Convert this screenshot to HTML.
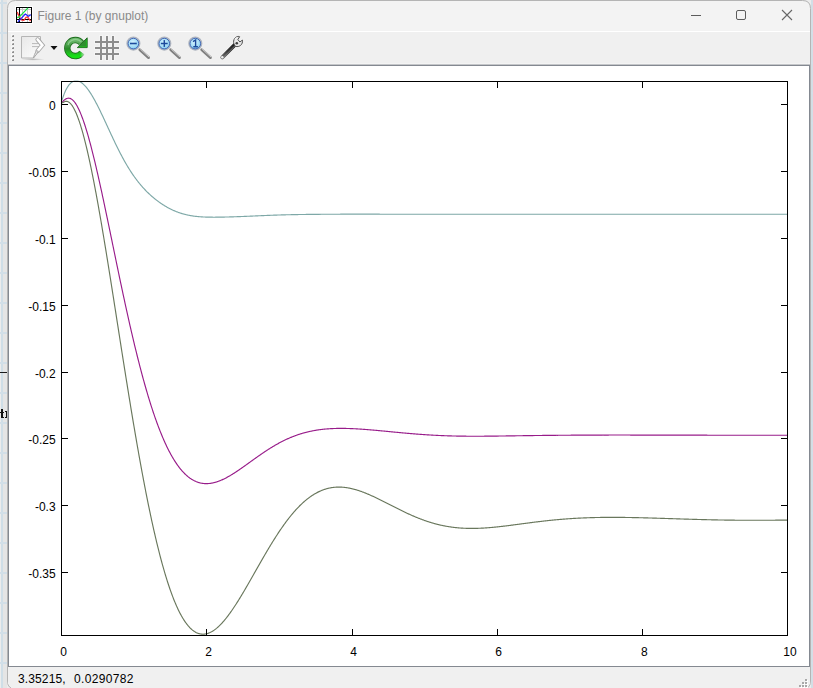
<!DOCTYPE html>
<html><head><meta charset="utf-8">
<style>
html,body{margin:0;padding:0;}
body{width:813px;height:688px;overflow:hidden;position:relative;background:#eceeef;font-family:"Liberation Sans",sans-serif;}
.abs{position:absolute;left:0;top:0;}
.t{position:absolute;white-space:pre;font-size:12px;line-height:14px;}
</style></head><body>
<svg class="abs" width="813" height="688" shape-rendering="crispEdges">
  <rect x="0" y="0" width="813" height="688" fill="#ececec"/>
  <rect x="1" y="0" width="2" height="688" fill="#cfdee7"/>
  <rect x="3" y="0" width="4" height="688" fill="#e5e5e5"/>
  <rect x="811" y="0" width="2" height="688" fill="#d3dee5"/>
  <g fill="#d2dfe8"><rect x="0" y="2" width="7" height="2"/><rect x="811" y="2" width="2" height="2"/><rect x="0" y="32" width="7" height="2"/><rect x="811" y="32" width="2" height="2"/><rect x="0" y="62" width="7" height="2"/><rect x="811" y="62" width="2" height="2"/><rect x="0" y="92" width="7" height="2"/><rect x="811" y="92" width="2" height="2"/><rect x="0" y="122" width="7" height="2"/><rect x="811" y="122" width="2" height="2"/><rect x="0" y="152" width="7" height="2"/><rect x="811" y="152" width="2" height="2"/><rect x="0" y="182" width="7" height="2"/><rect x="811" y="182" width="2" height="2"/><rect x="0" y="212" width="7" height="2"/><rect x="811" y="212" width="2" height="2"/><rect x="0" y="242" width="7" height="2"/><rect x="811" y="242" width="2" height="2"/><rect x="0" y="272" width="7" height="2"/><rect x="811" y="272" width="2" height="2"/><rect x="0" y="302" width="7" height="2"/><rect x="811" y="302" width="2" height="2"/><rect x="0" y="332" width="7" height="2"/><rect x="811" y="332" width="2" height="2"/><rect x="0" y="362" width="7" height="2"/><rect x="811" y="362" width="2" height="2"/><rect x="0" y="392" width="7" height="2"/><rect x="811" y="392" width="2" height="2"/><rect x="0" y="422" width="7" height="2"/><rect x="811" y="422" width="2" height="2"/><rect x="0" y="452" width="7" height="2"/><rect x="811" y="452" width="2" height="2"/><rect x="0" y="482" width="7" height="2"/><rect x="811" y="482" width="2" height="2"/><rect x="0" y="512" width="7" height="2"/><rect x="811" y="512" width="2" height="2"/><rect x="0" y="542" width="7" height="2"/><rect x="811" y="542" width="2" height="2"/><rect x="0" y="572" width="7" height="2"/><rect x="811" y="572" width="2" height="2"/><rect x="0" y="602" width="7" height="2"/><rect x="811" y="602" width="2" height="2"/><rect x="0" y="632" width="7" height="2"/><rect x="811" y="632" width="2" height="2"/><rect x="0" y="662" width="7" height="2"/><rect x="811" y="662" width="2" height="2"/></g>
  <rect x="0" y="372" width="7" height="1" fill="#1a1a1a"/><g fill="#111"><rect x="1" y="409" width="1.6" height="9"/><rect x="0" y="411.5" width="3.5" height="1.2"/><rect x="1.5" y="416.8" width="2.5" height="1.2"/><rect x="5.8" y="411" width="1.4" height="7"/><rect x="4.8" y="411" width="2" height="1"/><rect x="4.8" y="417" width="2" height="1"/></g>
  <!-- window -->
  
</svg>
<!-- window frame with rounded corners -->
<svg class="abs" width="813" height="688">
  <path d="M7.5,681 L7.5,8.5 Q7.5,0.5 15.5,0.5 L802.5,0.5 Q810.5,0.5 810.5,8.5 L810.5,681 Q810.5,689 802.5,689 L15.5,689 Q7.5,689 7.5,681 Z" fill="#f3f3f3" stroke="#b4b4b4" stroke-width="1"/>
</svg>
<svg class="abs" width="813" height="688" shape-rendering="crispEdges">
  <rect x="8" y="31" width="802" height="1" fill="#ffffff"/>
  <rect x="8" y="32" width="802" height="32" fill="#f0f0f0"/>
  <rect x="8" y="63" width="802" height="1" fill="#f4f4f4"/>
  <rect x="8" y="64" width="802" height="1" fill="#c4c6c9"/>
  <rect x="8" y="65" width="802" height="602" fill="#848991"/>
  <rect x="9" y="66" width="800" height="600" fill="#ffffff"/>
  <path d="M8,667 L810,667 L810,681 Q810,688.5 802.5,688.5 L15.5,688.5 Q8,688.5 8,681 Z" fill="#f0f0f0"/>
  <!-- grip dots -->
  <g fill="#8f8f8f"><rect x="11" y="34" width="3" height="3" fill="#f8f8f8"/><rect x="12" y="36" width="2" height="1" fill="#8e8e8e"/><rect x="13" y="35" width="1" height="1" fill="#9a9a9a"/><rect x="12" y="35" width="1" height="1" fill="#c8c8c8"/><rect x="11" y="38" width="3" height="3" fill="#f8f8f8"/><rect x="12" y="40" width="2" height="1" fill="#8e8e8e"/><rect x="13" y="39" width="1" height="1" fill="#9a9a9a"/><rect x="12" y="39" width="1" height="1" fill="#c8c8c8"/><rect x="11" y="42" width="3" height="3" fill="#f8f8f8"/><rect x="12" y="44" width="2" height="1" fill="#8e8e8e"/><rect x="13" y="43" width="1" height="1" fill="#9a9a9a"/><rect x="12" y="43" width="1" height="1" fill="#c8c8c8"/><rect x="11" y="46" width="3" height="3" fill="#f8f8f8"/><rect x="12" y="48" width="2" height="1" fill="#8e8e8e"/><rect x="13" y="47" width="1" height="1" fill="#9a9a9a"/><rect x="12" y="47" width="1" height="1" fill="#c8c8c8"/><rect x="11" y="50" width="3" height="3" fill="#f8f8f8"/><rect x="12" y="52" width="2" height="1" fill="#8e8e8e"/><rect x="13" y="51" width="1" height="1" fill="#9a9a9a"/><rect x="12" y="51" width="1" height="1" fill="#c8c8c8"/><rect x="11" y="54" width="3" height="3" fill="#f8f8f8"/><rect x="12" y="56" width="2" height="1" fill="#8e8e8e"/><rect x="13" y="55" width="1" height="1" fill="#9a9a9a"/><rect x="12" y="55" width="1" height="1" fill="#c8c8c8"/><rect x="11" y="58" width="3" height="3" fill="#f8f8f8"/><rect x="12" y="60" width="2" height="1" fill="#8e8e8e"/><rect x="13" y="59" width="1" height="1" fill="#9a9a9a"/><rect x="12" y="59" width="1" height="1" fill="#c8c8c8"/></g>
  <g fill="#ffffff"><rect x="806" y="680" width="2" height="2"/><rect x="803" y="683" width="2" height="2"/><rect x="806" y="683" width="2" height="2"/><rect x="800" y="686" width="2" height="2"/><rect x="803" y="686" width="2" height="2"/><rect x="806" y="686" width="2" height="2"/></g><g fill="#a8a8a8"><rect x="805" y="679" width="2" height="2"/><rect x="802" y="682" width="2" height="2"/><rect x="805" y="682" width="2" height="2"/><rect x="799" y="685" width="2" height="2"/><rect x="802" y="685" width="2" height="2"/><rect x="805" y="685" width="2" height="2"/></g>
</svg>
<!-- title icon -->
<svg class="abs" width="813" height="688">
  <rect x="15" y="6" width="18" height="18" fill="#ffffff"/>
  <rect x="16.5" y="7.5" width="15" height="15" fill="#ffffff" stroke="#000" stroke-width="1"/>
  <g stroke="#c8c8c8" stroke-width="1"><line x1="22.5" y1="8" x2="22.5" y2="22"/><line x1="27.5" y1="8" x2="27.5" y2="22"/><line x1="17" y1="9.5" x2="31" y2="9.5"/><line x1="17" y1="14.5" x2="31" y2="14.5"/></g>
  <g stroke="#000" stroke-width="1"><line x1="19.5" y1="8" x2="19.5" y2="22"/><line x1="17" y1="19.5" x2="31" y2="19.5"/></g>
  <path d="M17.2,12 L19.3,16.6 L21.4,20 L23.9,20.4 L26,17.3 L27.7,16.9 L30.5,21.1" fill="none" stroke="#ff3030" stroke-width="1.2"/>
  <path d="M17.2,17.6 L19.3,16.9 L28,7.8" fill="none" stroke="#10e040" stroke-width="1.2"/>
  <path d="M17.9,21.8 L25.3,14.1 L28.4,16.2 L30.8,14.8" fill="none" stroke="#2020ff" stroke-width="1.2"/>
</svg>
<div class="t" style="left:37.5px;top:9px;color:#8a8a8a;">Figure 1 (by gnuplot)</div>
<!-- window controls -->
<svg class="abs" width="813" height="688">
  <line x1="691" y1="15.5" x2="701" y2="15.5" stroke="#5c5c5c" stroke-width="1"/>
  <rect x="736.5" y="10.5" width="9" height="9" rx="1.5" fill="none" stroke="#5c5c5c" stroke-width="1"/>
  <path d="M782,10 L792,20 M792,10 L782,20" stroke="#666" stroke-width="1.1" fill="none"/>
</svg>
<svg class="abs" width="813" height="688">
  <defs>
    <linearGradient id="pg" x1="0" y1="0" x2="1" y2="1">
      <stop offset="0" stop-color="#e8e8e8"/><stop offset="1" stop-color="#fefefe"/>
    </linearGradient>
    <radialGradient id="sh" cx="0.5" cy="0.5" r="0.5">
      <stop offset="0" stop-color="#b8b8b8"/><stop offset="1" stop-color="#b8b8b8" stop-opacity="0"/>
    </radialGradient>
    <linearGradient id="gr" x1="0" y1="0" x2="0" y2="1">
      <stop offset="0" stop-color="#6fba6f"/><stop offset="0.3" stop-color="#4aa04a"/><stop offset="0.55" stop-color="#2a8a2a"/><stop offset="1" stop-color="#14e014"/>
    </linearGradient>
    <linearGradient id="fade" x1="0" y1="0" x2="1" y2="0">
      <stop offset="0" stop-color="#f0f0f0" stop-opacity="0"/><stop offset="0.6" stop-color="#f0f0f0" stop-opacity="0.9"/><stop offset="1" stop-color="#f0f0f0"/>
    </linearGradient>
    <radialGradient id="lens" cx="0.45" cy="0.4" r="0.6">
      <stop offset="0" stop-color="#d8f4ff"/><stop offset="0.7" stop-color="#9ad8f4"/><stop offset="1" stop-color="#6fb6e6"/>
    </radialGradient>
    <linearGradient id="hd" x1="0" y1="0" x2="1" y2="0">
      <stop offset="0" stop-color="#6a6a6a"/><stop offset="1" stop-color="#d0d0d0"/>
    </linearGradient>
  </defs>
  <!-- document icon -->
  <ellipse cx="33" cy="59.4" rx="11.5" ry="1.3" fill="url(#sh)"/>
  <path d="M21.5,36.5 L40.5,36.5 L40.5,40 L43,45 L33.5,58 L21.5,58 Z" fill="url(#pg)" stroke="#b5b5b5" stroke-width="1"/>
  <g stroke="#b9b9b9" stroke-width="1"><line x1="32" y1="43.6" x2="40" y2="43.6"/><line x1="32" y1="46.6" x2="40" y2="46.6"/></g>
  <path d="M37.6,39.5 L42.4,45.2 L37.6,50.9" fill="none" stroke="#a9a9a9" stroke-width="4.4" stroke-linecap="round" stroke-linejoin="miter"/>
  <path d="M37.6,39.5 L42.4,45.2 L37.6,50.9" fill="none" stroke="#ffffff" stroke-width="2.6" stroke-linecap="round" stroke-linejoin="miter"/>
  <path d="M38.4,51.2 Q36.5,55 33.3,58 Q34.2,54.5 36.4,50.6 Z" fill="#e2e2e2" stroke="#a6a6a6" stroke-width="0.9" stroke-linejoin="round"/>
  <path d="M50.5,46 L57.5,46 L54,50 Z" fill="#111"/>
  <!-- refresh -->
  <path d="M81.4,42.9 A8,8 0 1 0 81.85,52.6" fill="none" stroke="#1d6e1d" stroke-width="6.4"/>
  <path d="M81.4,42.9 A8,8 0 1 0 81.85,52.6" fill="none" stroke="url(#gr)" stroke-width="4.8"/>
  <path d="M81.5,42.2 A7.9,7.9 0 0 0 68,45" fill="none" stroke="#9ad89a" stroke-width="1.2" opacity="0.7"/>
  <path d="M77.3,47.6 L87.2,37.8 L87.2,47.6 Z" fill="#2f8f2f" stroke="#1a6a1a" stroke-width="0.9" stroke-linejoin="round"/>
  <path d="M79.5,46.8 L86.4,46.8 L86.4,40" fill="none" stroke="#20c020" stroke-width="1" opacity="0.8"/>
  <rect x="80" y="49" width="9" height="8" fill="url(#fade)"/>
<!-- grid -->
  <g fill="#ffffff" opacity="0.35" shape-rendering="crispEdges">
    <rect x="99" y="35" width="4" height="26"/><rect x="105" y="35" width="4" height="26"/><rect x="111" y="35" width="4" height="26"/>
    <rect x="94" y="40" width="26" height="4"/><rect x="94" y="46" width="26" height="4"/><rect x="94" y="52" width="26" height="4"/>
  </g>
  <g fill="#8d8d8d" shape-rendering="crispEdges">
    <rect x="100" y="36" width="2" height="24"/><rect x="106" y="36" width="2" height="24"/><rect x="112" y="36" width="2" height="24"/>
    <rect x="95" y="41" width="24" height="2"/><rect x="95" y="47" width="24" height="2"/><rect x="95" y="53" width="24" height="2"/>
  </g>
  <!-- magnifiers -->
  <g>
    <line x1="139.8" y1="49.8" x2="148.6" y2="57.6" stroke="#808080" stroke-width="2.8" stroke-linecap="round"/>
    <line x1="140.6" y1="49.4" x2="149.0" y2="56.9" stroke="#d8d8d8" stroke-width="0.9" stroke-linecap="round"/>
    <circle cx="133.4" cy="43.6" r="6.3" fill="url(#lens)" stroke="#aeb4bf" stroke-width="1.5"/>
    <circle cx="133.4" cy="43.6" r="5.3" fill="none" stroke="#3a5cb0" stroke-width="0.9"/>
    <line x1="130.0" y1="43.5" x2="136.8" y2="43.5" stroke="#1c4a9c" stroke-width="1.6"/>
  </g>
  <g>
    <line x1="170.7" y1="49.8" x2="179.5" y2="57.6" stroke="#808080" stroke-width="2.8" stroke-linecap="round"/>
    <line x1="171.5" y1="49.4" x2="179.9" y2="56.9" stroke="#d8d8d8" stroke-width="0.9" stroke-linecap="round"/>
    <circle cx="164.3" cy="43.6" r="6.3" fill="url(#lens)" stroke="#aeb4bf" stroke-width="1.5"/>
    <circle cx="164.3" cy="43.6" r="5.3" fill="none" stroke="#3a5cb0" stroke-width="0.9"/>
    <line x1="160.9" y1="43.5" x2="167.7" y2="43.5" stroke="#1c4a9c" stroke-width="1.5"/><line x1="164.3" y1="40.1" x2="164.3" y2="46.9" stroke="#1c4a9c" stroke-width="1.5"/>
  </g>
  <g>
    <line x1="201.7" y1="49.8" x2="210.5" y2="57.6" stroke="#808080" stroke-width="2.8" stroke-linecap="round"/>
    <line x1="202.5" y1="49.4" x2="210.9" y2="56.9" stroke="#d8d8d8" stroke-width="0.9" stroke-linecap="round"/>
    <circle cx="195.3" cy="43.6" r="6.3" fill="url(#lens)" stroke="#aeb4bf" stroke-width="1.5"/>
    <circle cx="195.3" cy="43.6" r="5.3" fill="none" stroke="#3a5cb0" stroke-width="0.9"/>
    <path d="M193.0,41.6 L195.6,40 L195.6,46.6 M193.3,46.7 L197.9,46.7" fill="none" stroke="#1c4a9c" stroke-width="1.4"/>
  </g>
  <!-- wrench -->
  <defs><linearGradient id="wh" gradientUnits="userSpaceOnUse" x1="235" y1="45" x2="221" y2="59">
    <stop offset="0" stop-color="#1e1e1e"/><stop offset="0.5" stop-color="#3a3a3a"/><stop offset="1" stop-color="#7a7a7a"/></linearGradient></defs>
  <path d="M222.3,57.3 L235,44.6" stroke="#f6f6f6" stroke-width="5.6" stroke-linecap="round" opacity="0.7"/>
  <path d="M222.3,57.3 L235,44.6" stroke="url(#wh)" stroke-width="4" stroke-linecap="round"/>
  <path d="M223.5,57.2 L234.4,46.3" stroke="#9a9a9a" stroke-width="0.8" stroke-linecap="round" opacity="0.8"/>
  <circle cx="222.3" cy="57.3" r="1.2" fill="#f0f0f0"/>
  <path d="M234.6,45.2 C232.3,41.8 234,37 238.2,36.4 L239.6,36.7 L237.9,39.6 L239.9,42 L242.4,40.1 C243.2,44.6 239.2,47.4 235.6,46.4 Z" fill="#e6e6e6" stroke="#3e3e3e" stroke-width="0.9" stroke-linejoin="round"/>
  <path d="M235.2,39.5 C235.6,38.2 236.6,37.5 237.6,37.3" fill="none" stroke="#ffffff" stroke-width="1"/>
  <circle cx="236.8" cy="43.3" r="1.3" fill="#3a3a3a"/>
</svg>

<!-- plot -->
<svg class="abs" width="813" height="688">
  <defs><clipPath id="pc"><rect x="61" y="80.5" width="727" height="556"/></clipPath></defs>
  <g fill="none" stroke-width="1.15" clip-path="url(#pc)">
    <path d="M62,100.12 62.5,98.56 63,97.08 63.5,95.69 64,94.37 64.5,93.13 65,91.96 65.5,90.86 66,89.83 66.5,88.87 67,87.96 67.5,87.13 68,86.35 68.5,85.62 69,84.96 69.5,84.35 70,83.79 70.5,83.28 71,82.82 71.5,82.41 72,82.05 72.5,81.73 73,81.46 73.5,81.23 74,81.05 74.5,80.90 75,80.80 75.5,80.73 76,80.71 76.5,80.72 77,80.76 77.5,80.84 78,80.96 78.5,81.11 79,81.29 79.5,81.51 80,81.76 80.5,82.03 81,82.34 81.5,82.68 82,83.05 82.5,83.44 83,83.87 83.5,84.32 84,84.79 84.5,85.29 85,85.82 85.5,86.37 86,86.95 86.5,87.55 87,88.17 87.5,88.82 88,89.48 88.5,90.17 89,90.88 89.5,91.61 90,92.35 90.5,93.12 91,93.91 91.5,94.71 92,95.53 92.5,96.37 93,97.22 93.5,98.09 94,98.98 94.5,99.88 95,100.79 95.5,101.72 96,102.66 96.5,103.61 97,104.57 97.5,105.55 98,106.53 98.5,107.53 99,108.54 99.5,109.55 100,110.57 100.5,111.60 101,112.64 101.5,113.69 102,114.74 102.5,115.80 103,116.86 103.5,117.92 104,119.00 104.5,120.07 105,121.15 105.5,122.23 106,123.31 106.5,124.40 107,125.48 107.5,126.57 108,127.65 108.5,128.74 109,129.83 109.5,130.91 110,131.99 110.5,133.07 111,134.15 111.5,135.23 112,136.30 112.5,137.36 113,138.43 113.5,139.49 114,140.54 114.5,141.59 115,142.64 115.5,143.68 116,144.71 116.5,145.73 117,146.75 117.5,147.77 118,148.77 118.5,149.77 119,150.76 119.5,151.74 120,152.72 120.5,153.68 121,154.64 121.5,155.59 122,156.53 122.5,157.46 123,158.39 123.5,159.30 124,160.20 124.5,161.10 125,161.98 125.5,162.86 126,163.73 126.5,164.58 127,165.43 127.5,166.27 128,167.10 128.5,167.91 129,168.72 129.5,169.52 130,170.31 130.5,171.09 131,171.86 131.5,172.62 132,173.37 132.5,174.11 133,174.84 133.5,175.56 134,176.27 134.5,176.98 135,177.67 135.5,178.35 136,179.03 136.5,179.70 137,180.35 137.5,181.00 138,181.64 138.5,182.27 139,182.90 139.5,183.51 140,184.12 140.5,184.72 141,185.31 141.5,185.89 142,186.46 142.5,187.03 143,187.59 143.5,188.14 144,188.68 144.5,189.22 145,189.75 145.5,190.27 146,190.78 146.5,191.29 147,191.79 147.5,192.29 148,192.77 148.5,193.26 149,193.73 149.5,194.20 150,194.66 150.5,195.12 151,195.57 151.5,196.01 152,196.45 152.5,196.88 153,197.31 153.5,197.73 154,198.15 154.5,198.56 155,198.96 155.5,199.36 156,199.75 156.5,200.14 157,200.52 157.5,200.90 158,201.27 158.5,201.64 159,202.00 159.5,202.36 160,202.71 160.5,203.06 161,203.40 161.5,203.74 162,204.07 162.5,204.40 163,204.72 163.5,205.04 164,205.35 164.5,205.66 165,205.96 165.5,206.26 166,206.56 166.5,206.85 167,207.13 167.5,207.41 168,207.69 168.5,207.96 169,208.22 169.5,208.48 170,208.74 170.5,208.99 171,209.24 171.5,209.48 172,209.72 172.5,209.96 173,210.19 173.5,210.41 174,210.63 174.5,210.85 175,211.06 175.5,211.27 176,211.47 176.5,211.67 177,211.87 177.5,212.06 178,212.24 178.5,212.42 179,212.60 179.5,212.77 180,212.94 180.5,213.11 181,213.27 181.5,213.42 182,213.58 182.5,213.73 183,213.87 183.5,214.01 184,214.15 184.5,214.28 185,214.41 185.5,214.53 186,214.66 186.5,214.77 187,214.89 187.5,215.00 188,215.11 188.5,215.21 189,215.31 189.5,215.41 190,215.50 190.5,215.59 191,215.68 191.5,215.76 192,215.84 192.5,215.92 193,215.99 193.5,216.06 194,216.13 194.5,216.20 195,216.26 195.5,216.32 196,216.38 196.5,216.44 197,216.49 197.5,216.54 198,216.59 198.5,216.63 199,216.68 199.5,216.72 200,216.76 200.5,216.79 201,216.83 201.5,216.86 202,216.89 202.5,216.92 203,216.95 203.5,216.97 204,217.00 204.5,217.02 205,217.04 205.5,217.06 206,217.08 206.5,217.09 207,217.11 207.5,217.12 208,217.14 208.5,217.15 209,217.16 209.5,217.16 210,217.17 210.5,217.18 211,217.18 211.5,217.19 212,217.19 212.5,217.19 213,217.20 213.5,217.20 214,217.20 214.5,217.20 215,217.20 215.5,217.19 216,217.19 216.5,217.19 217,217.18 217.5,217.18 218,217.17 218.5,217.17 219,217.16 219.5,217.15 220,217.15 220.5,217.14 221,217.13 221.5,217.12 222,217.11 222.5,217.10 223,217.09 223.5,217.08 224,217.07 224.5,217.06 225,217.05 225.5,217.04 226,217.03 226.5,217.01 227,217.00 227.5,216.99 228,216.97 228.5,216.96 229,216.95 229.5,216.93 230,216.92 230.5,216.90 231,216.89 231.5,216.88 232,216.86 232.5,216.84 233,216.83 233.5,216.81 234,216.80 234.5,216.78 235,216.76 235.5,216.75 236,216.73 236.5,216.71 237,216.69 237.5,216.68 238,216.66 238.5,216.64 239,216.62 239.5,216.60 240,216.58 240.5,216.57 241,216.55 241.5,216.53 242,216.51 242.5,216.49 243,216.47 243.5,216.45 244,216.43 244.5,216.41 245,216.39 245.5,216.37 246,216.35 246.5,216.33 247,216.30 247.5,216.28 248,216.26 248.5,216.24 249,216.22 249.5,216.20 250,216.18 250.5,216.15 251,216.13 251.5,216.11 252,216.09 252.5,216.07 253,216.04 253.5,216.02 254,216.00 254.5,215.98 255,215.96 255.5,215.93 256,215.91 256.5,215.89 257,215.87 257.5,215.84 258,215.82 258.5,215.80 259,215.78 259.5,215.75 260,215.73 260.5,215.71 261,215.69 261.5,215.67 262,215.64 262.5,215.62 263,215.60 263.5,215.58 264,215.56 264.5,215.54 265,215.52 265.5,215.50 266,215.47 266.5,215.45 267,215.43 267.5,215.41 268,215.39 268.5,215.37 269,215.35 269.5,215.33 270,215.31 270.5,215.29 271,215.27 271.5,215.26 272,215.24 272.5,215.22 273,215.20 273.5,215.18 274,215.16 274.5,215.15 275,215.13 275.5,215.11 276,215.09 276.5,215.08 277,215.06 277.5,215.04 278,215.03 278.5,215.01 279,215.00 279.5,214.98 280,214.97 280.5,214.95 281,214.94 281.5,214.92 282,214.91 282.5,214.89 283,214.88 283.5,214.87 284,214.85 284.5,214.84 285,214.83 285.5,214.81 286,214.80 286.5,214.79 287,214.78 287.5,214.76 288,214.75 288.5,214.74 289,214.73 289.5,214.72 290,214.71 290.5,214.70 291,214.69 291.5,214.68 292,214.67 292.5,214.66 293,214.65 293.5,214.64 294,214.63 294.5,214.62 295,214.61 295.5,214.60 296,214.59 296.5,214.58 297,214.57 297.5,214.57 298,214.56 298.5,214.55 299,214.54 299.5,214.53 300,214.53 300.5,214.52 301,214.51 301.5,214.50 302,214.50 302.5,214.49 303,214.48 303.5,214.48 304,214.47 304.5,214.46 305,214.46 305.5,214.45 306,214.44 306.5,214.44 307,214.43 307.5,214.43 308,214.42 308.5,214.41 309,214.41 309.5,214.40 310,214.40 310.5,214.39 311,214.39 311.5,214.38 312,214.38 312.5,214.37 313,214.36 313.5,214.36 314,214.35 314.5,214.35 315,214.35 315.5,214.34 316,214.34 316.5,214.33 317,214.33 317.5,214.32 318,214.32 318.5,214.31 319,214.31 319.5,214.31 320,214.30 320.5,214.30 321,214.29 321.5,214.29 322,214.29 322.5,214.28 323,214.28 323.5,214.28 324,214.27 324.5,214.27 325,214.27 325.5,214.26 326,214.26 326.5,214.26 327,214.25 327.5,214.25 328,214.25 328.5,214.24 329,214.24 329.5,214.24 330,214.24 330.5,214.23 331,214.23 331.5,214.23 332,214.23 332.5,214.22 333,214.22 333.5,214.22 334,214.22 334.5,214.21 335,214.21 335.5,214.21 336,214.21 336.5,214.21 337,214.20 337.5,214.20 338,214.20 338.5,214.20 339,214.20 339.5,214.20 340,214.20 340.5,214.19 341,214.19 341.5,214.19 342,214.19 342.5,214.19 343,214.19 343.5,214.19 344,214.19 344.5,214.19 345,214.19 345.5,214.18 346,214.18 346.5,214.18 347,214.18 347.5,214.18 348,214.18 348.5,214.18 349,214.18 349.5,214.18 350,214.18 350.5,214.18 351,214.18 351.5,214.18 352,214.18 352.5,214.18 353,214.18 353.5,214.18 354,214.18 354.5,214.18 355,214.18 355.5,214.18 356,214.18 356.5,214.18 357,214.18 357.5,214.18 358,214.18 358.5,214.18 359,214.18 359.5,214.18 360,214.18 360.5,214.18 361,214.18 361.5,214.18 362,214.18 362.5,214.18 363,214.18 363.5,214.18 364,214.18 364.5,214.18 365,214.18 365.5,214.18 366,214.18 366.5,214.18 367,214.18 367.5,214.18 368,214.18 368.5,214.19 369,214.19 369.5,214.19 370,214.19 370.5,214.19 371,214.19 371.5,214.19 372,214.19 372.5,214.19 373,214.19 373.5,214.19 374,214.19 374.5,214.19 375,214.19 375.5,214.19 376,214.19 376.5,214.19 377,214.19 377.5,214.19 378,214.19 378.5,214.19 379,214.19 379.5,214.19 380,214.20 380.5,214.20 381,214.20 381.5,214.20 382,214.20 382.5,214.20 383,214.20 383.5,214.20 384,214.20 384.5,214.20 385,214.20 385.5,214.20 386,214.20 386.5,214.20 387,214.20 387.5,214.20 388,214.20 388.5,214.20 389,214.20 389.5,214.20 390,214.20 390.5,214.20 391,214.20 391.5,214.20 392,214.21 392.5,214.21 393,214.21 393.5,214.21 394,214.21 394.5,214.21 395,214.21 395.5,214.21 396,214.21 396.5,214.21 397,214.21 397.5,214.21 398,214.21 398.5,214.21 399,214.21 399.5,214.21 400,214.21 400.5,214.21 401,214.21 401.5,214.21 402,214.21 402.5,214.21 403,214.21 403.5,214.21 404,214.22 404.5,214.22 405,214.22 405.5,214.22 406,214.22 406.5,214.22 407,214.22 407.5,214.22 408,214.22 408.5,214.22 409,214.22 409.5,214.22 410,214.22 410.5,214.22 411,214.22 411.5,214.22 412,214.22 412.5,214.22 413,214.22 413.5,214.22 414,214.22 414.5,214.22 415,214.22 415.5,214.22 416,214.23 416.5,214.23 417,214.23 417.5,214.23 418,214.23 418.5,214.23 419,214.23 419.5,214.23 420,214.23 420.5,214.23 421,214.23 421.5,214.23 422,214.23 422.5,214.23 423,214.23 423.5,214.23 424,214.23 424.5,214.23 425,214.23 425.5,214.23 426,214.23 426.5,214.23 427,214.23 427.5,214.23 428,214.23 428.5,214.23 429,214.23 429.5,214.23 430,214.24 430.5,214.24 431,214.24 431.5,214.24 432,214.24 432.5,214.24 433,214.24 433.5,214.24 434,214.24 434.5,214.24 435,214.24 435.5,214.24 436,214.24 436.5,214.24 437,214.24 437.5,214.24 438,214.24 438.5,214.24 439,214.24 439.5,214.24 440,214.24 440.5,214.24 441,214.24 441.5,214.24 442,214.24 442.5,214.24 443,214.24 443.5,214.24 444,214.24 444.5,214.24 445,214.24 445.5,214.24 446,214.24 446.5,214.24 447,214.24 447.5,214.24 448,214.24 448.5,214.24 449,214.24 449.5,214.24 450,214.24 450.5,214.24 451,214.24 451.5,214.24 452,214.24 452.5,214.24 453,214.24 453.5,214.24 454,214.24 454.5,214.24 455,214.24 455.5,214.24 456,214.24 456.5,214.24 457,214.24 457.5,214.24 458,214.24 458.5,214.24 459,214.24 459.5,214.24 460,214.24 460.5,214.24 461,214.25 461.5,214.25 462,214.25 462.5,214.25 463,214.25 463.5,214.25 464,214.25 464.5,214.25 465,214.25 465.5,214.25 466,214.25 466.5,214.25 467,214.25 467.5,214.25 468,214.25 468.5,214.25 469,214.25 469.5,214.25 470,214.25 470.5,214.25 471,214.25 471.5,214.25 472,214.25 472.5,214.25 473,214.25 473.5,214.25 474,214.25 474.5,214.25 475,214.25 475.5,214.25 476,214.25 476.5,214.25 477,214.25 477.5,214.25 478,214.25 478.5,214.25 479,214.25 479.5,214.25 480,214.25 480.5,214.25 481,214.25 481.5,214.25 482,214.25 482.5,214.25 483,214.25 483.5,214.25 484,214.25 484.5,214.25 485,214.25 485.5,214.25 486,214.25 486.5,214.25 487,214.25 487.5,214.25 488,214.25 488.5,214.25 489,214.25 489.5,214.25 490,214.25 490.5,214.25 491,214.25 491.5,214.25 492,214.25 492.5,214.25 493,214.25 493.5,214.25 494,214.25 494.5,214.25 495,214.25 495.5,214.25 496,214.25 496.5,214.25 497,214.25 497.5,214.25 498,214.25 498.5,214.25 499,214.25 499.5,214.25 500,214.25 500.5,214.25 501,214.25 501.5,214.25 502,214.25 502.5,214.25 503,214.25 503.5,214.25 504,214.25 504.5,214.25 505,214.25 505.5,214.25 506,214.25 506.5,214.25 507,214.25 507.5,214.25 508,214.25 508.5,214.25 509,214.25 509.5,214.25 510,214.25 510.5,214.25 511,214.25 511.5,214.25 512,214.25 512.5,214.25 513,214.25 513.5,214.25 514,214.25 514.5,214.25 515,214.25 515.5,214.25 516,214.25 516.5,214.25 517,214.25 517.5,214.25 518,214.25 518.5,214.25 519,214.25 519.5,214.25 520,214.25 520.5,214.25 521,214.25 521.5,214.25 522,214.25 522.5,214.25 523,214.25 523.5,214.25 524,214.25 524.5,214.25 525,214.25 525.5,214.25 526,214.25 526.5,214.25 527,214.25 527.5,214.25 528,214.25 528.5,214.25 529,214.25 529.5,214.25 530,214.25 530.5,214.25 531,214.25 531.5,214.25 532,214.25 532.5,214.25 533,214.25 533.5,214.25 534,214.25 534.5,214.25 535,214.25 535.5,214.25 536,214.25 536.5,214.25 537,214.25 537.5,214.25 538,214.25 538.5,214.25 539,214.25 539.5,214.25 540,214.25 540.5,214.25 541,214.25 541.5,214.25 542,214.25 542.5,214.25 543,214.25 543.5,214.25 544,214.25 544.5,214.25 545,214.25 545.5,214.25 546,214.25 546.5,214.25 547,214.25 547.5,214.25 548,214.25 548.5,214.25 549,214.25 549.5,214.25 550,214.25 550.5,214.25 551,214.25 551.5,214.25 552,214.25 552.5,214.25 553,214.25 553.5,214.25 554,214.25 554.5,214.25 555,214.25 555.5,214.25 556,214.25 556.5,214.25 557,214.25 557.5,214.25 558,214.25 558.5,214.25 559,214.25 559.5,214.25 560,214.25 560.5,214.25 561,214.25 561.5,214.25 562,214.25 562.5,214.25 563,214.25 563.5,214.25 564,214.25 564.5,214.25 565,214.25 565.5,214.25 566,214.25 566.5,214.25 567,214.25 567.5,214.25 568,214.25 568.5,214.25 569,214.25 569.5,214.25 570,214.25 570.5,214.25 571,214.25 571.5,214.25 572,214.25 572.5,214.25 573,214.25 573.5,214.25 574,214.25 574.5,214.25 575,214.25 575.5,214.25 576,214.25 576.5,214.25 577,214.25 577.5,214.25 578,214.25 578.5,214.25 579,214.25 579.5,214.25 580,214.25 580.5,214.25 581,214.25 581.5,214.25 582,214.25 582.5,214.25 583,214.25 583.5,214.25 584,214.25 584.5,214.25 585,214.25 585.5,214.25 586,214.25 586.5,214.25 587,214.25 587.5,214.25 588,214.25 588.5,214.25 589,214.25 589.5,214.25 590,214.25 590.5,214.25 591,214.25 591.5,214.25 592,214.25 592.5,214.25 593,214.25 593.5,214.25 594,214.25 594.5,214.25 595,214.25 595.5,214.25 596,214.25 596.5,214.25 597,214.25 597.5,214.25 598,214.25 598.5,214.25 599,214.25 599.5,214.25 600,214.25 600.5,214.25 601,214.25 601.5,214.25 602,214.25 602.5,214.25 603,214.25 603.5,214.25 604,214.25 604.5,214.25 605,214.25 605.5,214.25 606,214.25 606.5,214.25 607,214.25 607.5,214.25 608,214.25 608.5,214.25 609,214.25 609.5,214.25 610,214.25 610.5,214.25 611,214.25 611.5,214.25 612,214.25 612.5,214.25 613,214.25 613.5,214.25 614,214.25 614.5,214.25 615,214.25 615.5,214.25 616,214.25 616.5,214.25 617,214.25 617.5,214.25 618,214.25 618.5,214.25 619,214.25 619.5,214.25 620,214.25 620.5,214.25 621,214.25 621.5,214.25 622,214.25 622.5,214.25 623,214.25 623.5,214.25 624,214.25 624.5,214.25 625,214.25 625.5,214.25 626,214.25 626.5,214.25 627,214.25 627.5,214.25 628,214.25 628.5,214.25 629,214.25 629.5,214.25 630,214.25 630.5,214.25 631,214.25 631.5,214.25 632,214.25 632.5,214.25 633,214.25 633.5,214.25 634,214.25 634.5,214.25 635,214.25 635.5,214.25 636,214.25 636.5,214.25 637,214.25 637.5,214.25 638,214.25 638.5,214.25 639,214.25 639.5,214.25 640,214.25 640.5,214.25 641,214.25 641.5,214.25 642,214.25 642.5,214.25 643,214.25 643.5,214.25 644,214.25 644.5,214.25 645,214.25 645.5,214.25 646,214.25 646.5,214.25 647,214.25 647.5,214.25 648,214.25 648.5,214.25 649,214.25 649.5,214.25 650,214.25 650.5,214.25 651,214.25 651.5,214.25 652,214.25 652.5,214.25 653,214.25 653.5,214.25 654,214.25 654.5,214.25 655,214.25 655.5,214.25 656,214.25 656.5,214.25 657,214.25 657.5,214.25 658,214.25 658.5,214.25 659,214.25 659.5,214.25 660,214.25 660.5,214.25 661,214.25 661.5,214.25 662,214.25 662.5,214.25 663,214.25 663.5,214.25 664,214.25 664.5,214.25 665,214.25 665.5,214.25 666,214.25 666.5,214.25 667,214.25 667.5,214.25 668,214.25 668.5,214.25 669,214.25 669.5,214.25 670,214.25 670.5,214.25 671,214.25 671.5,214.25 672,214.25 672.5,214.25 673,214.25 673.5,214.25 674,214.25 674.5,214.25 675,214.25 675.5,214.25 676,214.25 676.5,214.25 677,214.25 677.5,214.25 678,214.25 678.5,214.25 679,214.25 679.5,214.25 680,214.25 680.5,214.25 681,214.25 681.5,214.25 682,214.25 682.5,214.25 683,214.25 683.5,214.25 684,214.25 684.5,214.25 685,214.25 685.5,214.25 686,214.25 686.5,214.25 687,214.25 687.5,214.25 688,214.25 688.5,214.25 689,214.25 689.5,214.25 690,214.25 690.5,214.25 691,214.25 691.5,214.25 692,214.25 692.5,214.25 693,214.25 693.5,214.25 694,214.25 694.5,214.25 695,214.25 695.5,214.25 696,214.25 696.5,214.25 697,214.25 697.5,214.25 698,214.25 698.5,214.25 699,214.25 699.5,214.25 700,214.25 700.5,214.25 701,214.25 701.5,214.25 702,214.25 702.5,214.25 703,214.25 703.5,214.25 704,214.25 704.5,214.25 705,214.25 705.5,214.25 706,214.25 706.5,214.25 707,214.25 707.5,214.25 708,214.25 708.5,214.25 709,214.25 709.5,214.25 710,214.25 710.5,214.25 711,214.25 711.5,214.25 712,214.25 712.5,214.25 713,214.25 713.5,214.25 714,214.25 714.5,214.25 715,214.25 715.5,214.25 716,214.25 716.5,214.25 717,214.25 717.5,214.25 718,214.25 718.5,214.25 719,214.25 719.5,214.25 720,214.25 720.5,214.25 721,214.25 721.5,214.25 722,214.25 722.5,214.25 723,214.25 723.5,214.25 724,214.25 724.5,214.25 725,214.25 725.5,214.25 726,214.25 726.5,214.25 727,214.25 727.5,214.25 728,214.25 728.5,214.25 729,214.25 729.5,214.25 730,214.25 730.5,214.25 731,214.25 731.5,214.25 732,214.25 732.5,214.25 733,214.25 733.5,214.25 734,214.25 734.5,214.25 735,214.25 735.5,214.25 736,214.25 736.5,214.25 737,214.25 737.5,214.25 738,214.25 738.5,214.25 739,214.25 739.5,214.25 740,214.25 740.5,214.25 741,214.25 741.5,214.25 742,214.25 742.5,214.25 743,214.25 743.5,214.25 744,214.25 744.5,214.25 745,214.25 745.5,214.25 746,214.25 746.5,214.25 747,214.25 747.5,214.25 748,214.25 748.5,214.25 749,214.25 749.5,214.25 750,214.25 750.5,214.25 751,214.25 751.5,214.25 752,214.25 752.5,214.25 753,214.25 753.5,214.25 754,214.25 754.5,214.25 755,214.25 755.5,214.25 756,214.25 756.5,214.25 757,214.25 757.5,214.25 758,214.25 758.5,214.25 759,214.25 759.5,214.25 760,214.25 760.5,214.25 761,214.25 761.5,214.25 762,214.25 762.5,214.25 763,214.25 763.5,214.25 764,214.25 764.5,214.25 765,214.25 765.5,214.25 766,214.25 766.5,214.25 767,214.25 767.5,214.25 768,214.25 768.5,214.25 769,214.25 769.5,214.25 770,214.25 770.5,214.25 771,214.25 771.5,214.25 772,214.25 772.5,214.25 773,214.25 773.5,214.25 774,214.25 774.5,214.25 775,214.25 775.5,214.25 776,214.25 776.5,214.25 777,214.25 777.5,214.25 778,214.25 778.5,214.25 779,214.25 779.5,214.25 780,214.25 780.5,214.25 781,214.25 781.5,214.25 782,214.25 782.5,214.25 783,214.25 783.5,214.25 784,214.25 784.5,214.25 785,214.25 785.5,214.25 786,214.25 786.5,214.25 787,214.25" stroke="#7ea8a7"/>
    <path d="M62,102.33 62.5,101.77 63,101.24 63.5,100.74 64,100.28 64.5,99.85 65,99.47 65.5,99.14 66,98.85 66.5,98.61 67,98.43 67.5,98.29 68,98.21 68.5,98.18 69,98.20 69.5,98.28 70,98.41 70.5,98.59 71,98.83 71.5,99.13 72,99.48 72.5,99.88 73,100.33 73.5,100.84 74,101.40 74.5,102.01 75,102.67 75.5,103.39 76,104.15 76.5,104.96 77,105.82 77.5,106.73 78,107.68 78.5,108.68 79,109.73 79.5,110.82 80,111.96 80.5,113.14 81,114.36 81.5,115.62 82,116.92 82.5,118.26 83,119.65 83.5,121.07 84,122.52 84.5,124.02 85,125.55 85.5,127.11 86,128.71 86.5,130.35 87,132.01 87.5,133.71 88,135.44 88.5,137.20 89,138.99 89.5,140.80 90,142.65 90.5,144.52 91,146.42 91.5,148.35 92,150.30 92.5,152.27 93,154.27 93.5,156.29 94,158.33 94.5,160.40 95,162.48 95.5,164.59 96,166.72 96.5,168.86 97,171.02 97.5,173.20 98,175.40 98.5,177.61 99,179.83 99.5,182.08 100,184.33 100.5,186.60 101,188.88 101.5,191.18 102,193.48 102.5,195.80 103,198.13 103.5,200.46 104,202.81 104.5,205.16 105,207.53 105.5,209.90 106,212.27 106.5,214.66 107,217.05 107.5,219.44 108,221.84 108.5,224.25 109,226.65 109.5,229.07 110,231.48 110.5,233.90 111,236.31 111.5,238.73 112,241.15 112.5,243.57 113,246.00 113.5,248.42 114,250.84 114.5,253.25 115,255.67 115.5,258.08 116,260.50 116.5,262.90 117,265.31 117.5,267.71 118,270.11 118.5,272.50 119,274.89 119.5,277.27 120,279.65 120.5,282.02 121,284.38 121.5,286.74 122,289.09 122.5,291.44 123,293.77 123.5,296.10 124,298.42 124.5,300.73 125,303.03 125.5,305.33 126,307.61 126.5,309.89 127,312.15 127.5,314.40 128,316.65 128.5,318.88 129,321.10 129.5,323.31 130,325.51 130.5,327.70 131,329.88 131.5,332.04 132,334.19 132.5,336.33 133,338.46 133.5,340.57 134,342.67 134.5,344.76 135,346.84 135.5,348.90 136,350.94 136.5,352.98 137,354.99 137.5,357.00 138,358.99 138.5,360.96 139,362.92 139.5,364.87 140,366.80 140.5,368.72 141,370.62 141.5,372.50 142,374.37 142.5,376.23 143,378.07 143.5,379.89 144,381.70 144.5,383.49 145,385.27 145.5,387.03 146,388.77 146.5,390.50 147,392.21 147.5,393.90 148,395.58 148.5,397.24 149,398.89 149.5,400.52 150,402.13 150.5,403.72 151,405.30 151.5,406.87 152,408.41 152.5,409.94 153,411.45 153.5,412.95 154,414.42 154.5,415.88 155,417.33 155.5,418.76 156,420.17 156.5,421.56 157,422.94 157.5,424.30 158,425.64 158.5,426.96 159,428.27 159.5,429.56 160,430.84 160.5,432.10 161,433.34 161.5,434.56 162,435.77 162.5,436.96 163,438.14 163.5,439.29 164,440.43 164.5,441.56 165,442.66 165.5,443.76 166,444.83 166.5,445.89 167,446.93 167.5,447.95 168,448.96 168.5,449.95 169,450.93 169.5,451.89 170,452.83 170.5,453.76 171,454.67 171.5,455.57 172,456.45 172.5,457.31 173,458.16 173.5,458.99 174,459.81 174.5,460.61 175,461.39 175.5,462.16 176,462.92 176.5,463.66 177,464.38 177.5,465.09 178,465.78 178.5,466.46 179,467.13 179.5,467.78 180,468.41 180.5,469.03 181,469.64 181.5,470.23 182,470.81 182.5,471.37 183,471.92 183.5,472.45 184,472.97 184.5,473.48 185,473.97 185.5,474.45 186,474.92 186.5,475.37 187,475.81 187.5,476.23 188,476.65 188.5,477.05 189,477.43 189.5,477.81 190,478.17 190.5,478.51 191,478.85 191.5,479.17 192,479.48 192.5,479.78 193,480.07 193.5,480.34 194,480.61 194.5,480.86 195,481.09 195.5,481.32 196,481.54 196.5,481.74 197,481.94 197.5,482.12 198,482.29 198.5,482.45 199,482.60 199.5,482.74 200,482.87 200.5,482.98 201,483.09 201.5,483.19 202,483.28 202.5,483.35 203,483.42 203.5,483.48 204,483.53 204.5,483.57 205,483.60 205.5,483.62 206,483.63 206.5,483.63 207,483.62 207.5,483.61 208,483.58 208.5,483.55 209,483.51 209.5,483.46 210,483.40 210.5,483.33 211,483.26 211.5,483.18 212,483.09 212.5,482.99 213,482.88 213.5,482.77 214,482.65 214.5,482.53 215,482.39 215.5,482.25 216,482.10 216.5,481.95 217,481.79 217.5,481.62 218,481.45 218.5,481.27 219,481.08 219.5,480.89 220,480.69 220.5,480.49 221,480.28 221.5,480.07 222,479.85 222.5,479.62 223,479.39 223.5,479.16 224,478.91 224.5,478.67 225,478.42 225.5,478.16 226,477.90 226.5,477.64 227,477.37 227.5,477.10 228,476.82 228.5,476.54 229,476.26 229.5,475.97 230,475.68 230.5,475.38 231,475.09 231.5,474.78 232,474.48 232.5,474.17 233,473.86 233.5,473.54 234,473.23 234.5,472.91 235,472.58 235.5,472.26 236,471.93 236.5,471.60 237,471.27 237.5,470.93 238,470.60 238.5,470.26 239,469.92 239.5,469.57 240,469.23 240.5,468.88 241,468.54 241.5,468.19 242,467.84 242.5,467.49 243,467.13 243.5,466.78 244,466.43 244.5,466.07 245,465.71 245.5,465.36 246,465.00 246.5,464.64 247,464.28 247.5,463.92 248,463.56 248.5,463.20 249,462.84 249.5,462.48 250,462.12 250.5,461.76 251,461.40 251.5,461.04 252,460.68 252.5,460.32 253,459.96 253.5,459.60 254,459.24 254.5,458.89 255,458.53 255.5,458.17 256,457.82 256.5,457.46 257,457.11 257.5,456.75 258,456.40 258.5,456.05 259,455.70 259.5,455.35 260,455.00 260.5,454.66 261,454.31 261.5,453.97 262,453.62 262.5,453.28 263,452.94 263.5,452.61 264,452.27 264.5,451.93 265,451.60 265.5,451.27 266,450.94 266.5,450.61 267,450.29 267.5,449.96 268,449.64 268.5,449.32 269,449.00 269.5,448.69 270,448.37 270.5,448.06 271,447.75 271.5,447.44 272,447.14 272.5,446.83 273,446.53 273.5,446.23 274,445.94 274.5,445.64 275,445.35 275.5,445.06 276,444.77 276.5,444.49 277,444.21 277.5,443.93 278,443.65 278.5,443.38 279,443.10 279.5,442.83 280,442.57 280.5,442.30 281,442.04 281.5,441.78 282,441.52 282.5,441.27 283,441.02 283.5,440.77 284,440.52 284.5,440.28 285,440.04 285.5,439.80 286,439.57 286.5,439.33 287,439.10 287.5,438.87 288,438.65 288.5,438.43 289,438.21 289.5,437.99 290,437.78 290.5,437.57 291,437.36 291.5,437.15 292,436.95 292.5,436.75 293,436.55 293.5,436.36 294,436.17 294.5,435.98 295,435.79 295.5,435.61 296,435.42 296.5,435.25 297,435.07 297.5,434.90 298,434.73 298.5,434.56 299,434.39 299.5,434.23 300,434.07 300.5,433.91 301,433.76 301.5,433.60 302,433.45 302.5,433.31 303,433.16 303.5,433.02 304,432.88 304.5,432.74 305,432.61 305.5,432.48 306,432.35 306.5,432.22 307,432.10 307.5,431.97 308,431.85 308.5,431.74 309,431.62 309.5,431.51 310,431.40 310.5,431.29 311,431.19 311.5,431.08 312,430.98 312.5,430.88 313,430.79 313.5,430.69 314,430.60 314.5,430.51 315,430.42 315.5,430.34 316,430.25 316.5,430.17 317,430.09 317.5,430.02 318,429.94 318.5,429.87 319,429.80 319.5,429.73 320,429.66 320.5,429.60 321,429.53 321.5,429.47 322,429.41 322.5,429.36 323,429.30 323.5,429.25 324,429.19 324.5,429.14 325,429.10 325.5,429.05 326,429.01 326.5,428.96 327,428.92 327.5,428.88 328,428.85 328.5,428.81 329,428.77 329.5,428.74 330,428.71 330.5,428.68 331,428.65 331.5,428.63 332,428.60 332.5,428.58 333,428.56 333.5,428.54 334,428.52 334.5,428.50 335,428.48 335.5,428.47 336,428.45 336.5,428.44 337,428.43 337.5,428.42 338,428.41 338.5,428.41 339,428.40 339.5,428.40 340,428.39 340.5,428.39 341,428.39 341.5,428.39 342,428.39 342.5,428.39 343,428.40 343.5,428.40 344,428.41 344.5,428.42 345,428.42 345.5,428.43 346,428.44 346.5,428.45 347,428.47 347.5,428.48 348,428.49 348.5,428.51 349,428.52 349.5,428.54 350,428.56 350.5,428.58 351,428.60 351.5,428.62 352,428.64 352.5,428.66 353,428.68 353.5,428.70 354,428.73 354.5,428.75 355,428.78 355.5,428.80 356,428.83 356.5,428.86 357,428.89 357.5,428.92 358,428.95 358.5,428.98 359,429.01 359.5,429.04 360,429.07 360.5,429.10 361,429.14 361.5,429.17 362,429.21 362.5,429.24 363,429.28 363.5,429.31 364,429.35 364.5,429.39 365,429.42 365.5,429.46 366,429.50 366.5,429.54 367,429.58 367.5,429.62 368,429.66 368.5,429.70 369,429.74 369.5,429.78 370,429.82 370.5,429.86 371,429.91 371.5,429.95 372,429.99 372.5,430.04 373,430.08 373.5,430.12 374,430.17 374.5,430.21 375,430.26 375.5,430.30 376,430.35 376.5,430.39 377,430.44 377.5,430.48 378,430.53 378.5,430.57 379,430.62 379.5,430.67 380,430.71 380.5,430.76 381,430.81 381.5,430.86 382,430.90 382.5,430.95 383,431.00 383.5,431.05 384,431.09 384.5,431.14 385,431.19 385.5,431.24 386,431.28 386.5,431.33 387,431.38 387.5,431.43 388,431.48 388.5,431.53 389,431.57 389.5,431.62 390,431.67 390.5,431.72 391,431.77 391.5,431.81 392,431.86 392.5,431.91 393,431.96 393.5,432.01 394,432.06 394.5,432.10 395,432.15 395.5,432.20 396,432.25 396.5,432.29 397,432.34 397.5,432.39 398,432.44 398.5,432.48 399,432.53 399.5,432.58 400,432.62 400.5,432.67 401,432.72 401.5,432.76 402,432.81 402.5,432.86 403,432.90 403.5,432.95 404,432.99 404.5,433.04 405,433.08 405.5,433.13 406,433.17 406.5,433.22 407,433.26 407.5,433.31 408,433.35 408.5,433.39 409,433.44 409.5,433.48 410,433.52 410.5,433.57 411,433.61 411.5,433.65 412,433.69 412.5,433.73 413,433.78 413.5,433.82 414,433.86 414.5,433.90 415,433.94 415.5,433.98 416,434.02 416.5,434.06 417,434.10 417.5,434.13 418,434.17 418.5,434.21 419,434.25 419.5,434.29 420,434.32 420.5,434.36 421,434.40 421.5,434.43 422,434.47 422.5,434.50 423,434.54 423.5,434.57 424,434.61 424.5,434.64 425,434.68 425.5,434.71 426,434.74 426.5,434.78 427,434.81 427.5,434.84 428,434.87 428.5,434.90 429,434.93 429.5,434.97 430,435.00 430.5,435.03 431,435.05 431.5,435.08 432,435.11 432.5,435.14 433,435.17 433.5,435.20 434,435.22 434.5,435.25 435,435.28 435.5,435.30 436,435.33 436.5,435.35 437,435.38 437.5,435.40 438,435.43 438.5,435.45 439,435.47 439.5,435.50 440,435.52 440.5,435.54 441,435.56 441.5,435.59 442,435.61 442.5,435.63 443,435.65 443.5,435.67 444,435.69 444.5,435.71 445,435.72 445.5,435.74 446,435.76 446.5,435.78 447,435.80 447.5,435.81 448,435.83 448.5,435.85 449,435.86 449.5,435.88 450,435.89 450.5,435.91 451,435.92 451.5,435.94 452,435.95 452.5,435.96 453,435.97 453.5,435.99 454,436.00 454.5,436.01 455,436.02 455.5,436.03 456,436.05 456.5,436.06 457,436.07 457.5,436.08 458,436.09 458.5,436.09 459,436.10 459.5,436.11 460,436.12 460.5,436.13 461,436.14 461.5,436.14 462,436.15 462.5,436.16 463,436.16 463.5,436.17 464,436.17 464.5,436.18 465,436.18 465.5,436.19 466,436.19 466.5,436.20 467,436.20 467.5,436.21 468,436.21 468.5,436.21 469,436.22 469.5,436.22 470,436.22 470.5,436.22 471,436.23 471.5,436.23 472,436.23 472.5,436.23 473,436.23 473.5,436.23 474,436.23 474.5,436.23 475,436.23 475.5,436.23 476,436.23 476.5,436.23 477,436.23 477.5,436.23 478,436.23 478.5,436.23 479,436.22 479.5,436.22 480,436.22 480.5,436.22 481,436.22 481.5,436.21 482,436.21 482.5,436.21 483,436.20 483.5,436.20 484,436.20 484.5,436.19 485,436.19 485.5,436.19 486,436.18 486.5,436.18 487,436.17 487.5,436.17 488,436.17 488.5,436.16 489,436.16 489.5,436.15 490,436.15 490.5,436.14 491,436.14 491.5,436.13 492,436.13 492.5,436.12 493,436.11 493.5,436.11 494,436.10 494.5,436.10 495,436.09 495.5,436.08 496,436.08 496.5,436.07 497,436.07 497.5,436.06 498,436.05 498.5,436.05 499,436.04 499.5,436.03 500,436.03 500.5,436.02 501,436.01 501.5,436.01 502,436.00 502.5,435.99 503,435.99 503.5,435.98 504,435.97 504.5,435.96 505,435.96 505.5,435.95 506,435.94 506.5,435.94 507,435.93 507.5,435.92 508,435.91 508.5,435.91 509,435.90 509.5,435.89 510,435.88 510.5,435.88 511,435.87 511.5,435.86 512,435.85 512.5,435.85 513,435.84 513.5,435.83 514,435.83 514.5,435.82 515,435.81 515.5,435.80 516,435.80 516.5,435.79 517,435.78 517.5,435.77 518,435.77 518.5,435.76 519,435.75 519.5,435.74 520,435.74 520.5,435.73 521,435.72 521.5,435.72 522,435.71 522.5,435.70 523,435.69 523.5,435.69 524,435.68 524.5,435.67 525,435.67 525.5,435.66 526,435.65 526.5,435.65 527,435.64 527.5,435.63 528,435.63 528.5,435.62 529,435.61 529.5,435.60 530,435.60 530.5,435.59 531,435.59 531.5,435.58 532,435.57 532.5,435.57 533,435.56 533.5,435.55 534,435.55 534.5,435.54 535,435.53 535.5,435.53 536,435.52 536.5,435.52 537,435.51 537.5,435.50 538,435.50 538.5,435.49 539,435.49 539.5,435.48 540,435.47 540.5,435.47 541,435.46 541.5,435.46 542,435.45 542.5,435.44 543,435.44 543.5,435.43 544,435.43 544.5,435.42 545,435.42 545.5,435.41 546,435.41 546.5,435.40 547,435.40 547.5,435.39 548,435.39 548.5,435.38 549,435.38 549.5,435.37 550,435.37 550.5,435.36 551,435.36 551.5,435.35 552,435.35 552.5,435.34 553,435.34 553.5,435.33 554,435.33 554.5,435.32 555,435.32 555.5,435.31 556,435.31 556.5,435.30 557,435.30 557.5,435.30 558,435.29 558.5,435.29 559,435.28 559.5,435.28 560,435.27 560.5,435.27 561,435.27 561.5,435.26 562,435.26 562.5,435.25 563,435.25 563.5,435.25 564,435.24 564.5,435.24 565,435.23 565.5,435.23 566,435.23 566.5,435.22 567,435.22 567.5,435.22 568,435.21 568.5,435.21 569,435.21 569.5,435.20 570,435.20 570.5,435.20 571,435.19 571.5,435.19 572,435.19 572.5,435.18 573,435.18 573.5,435.18 574,435.17 574.5,435.17 575,435.17 575.5,435.16 576,435.16 576.5,435.16 577,435.16 577.5,435.15 578,435.15 578.5,435.15 579,435.14 579.5,435.14 580,435.14 580.5,435.14 581,435.13 581.5,435.13 582,435.13 582.5,435.13 583,435.12 583.5,435.12 584,435.12 584.5,435.12 585,435.11 585.5,435.11 586,435.11 586.5,435.11 587,435.11 587.5,435.10 588,435.10 588.5,435.10 589,435.10 589.5,435.10 590,435.09 590.5,435.09 591,435.09 591.5,435.09 592,435.09 592.5,435.08 593,435.08 593.5,435.08 594,435.08 594.5,435.08 595,435.08 595.5,435.07 596,435.07 596.5,435.07 597,435.07 597.5,435.07 598,435.07 598.5,435.07 599,435.06 599.5,435.06 600,435.06 600.5,435.06 601,435.06 601.5,435.06 602,435.06 602.5,435.06 603,435.05 603.5,435.05 604,435.05 604.5,435.05 605,435.05 605.5,435.05 606,435.05 606.5,435.05 607,435.05 607.5,435.05 608,435.05 608.5,435.05 609,435.04 609.5,435.04 610,435.04 610.5,435.04 611,435.04 611.5,435.04 612,435.04 612.5,435.04 613,435.04 613.5,435.04 614,435.04 614.5,435.04 615,435.04 615.5,435.04 616,435.04 616.5,435.04 617,435.04 617.5,435.04 618,435.04 618.5,435.04 619,435.04 619.5,435.04 620,435.04 620.5,435.04 621,435.04 621.5,435.04 622,435.04 622.5,435.04 623,435.04 623.5,435.04 624,435.04 624.5,435.04 625,435.04 625.5,435.04 626,435.04 626.5,435.04 627,435.04 627.5,435.04 628,435.04 628.5,435.04 629,435.04 629.5,435.04 630,435.05 630.5,435.05 631,435.05 631.5,435.05 632,435.05 632.5,435.05 633,435.05 633.5,435.05 634,435.05 634.5,435.05 635,435.05 635.5,435.05 636,435.05 636.5,435.05 637,435.06 637.5,435.06 638,435.06 638.5,435.06 639,435.06 639.5,435.06 640,435.06 640.5,435.06 641,435.06 641.5,435.06 642,435.07 642.5,435.07 643,435.07 643.5,435.07 644,435.07 644.5,435.07 645,435.07 645.5,435.07 646,435.07 646.5,435.08 647,435.08 647.5,435.08 648,435.08 648.5,435.08 649,435.08 649.5,435.08 650,435.08 650.5,435.08 651,435.09 651.5,435.09 652,435.09 652.5,435.09 653,435.09 653.5,435.09 654,435.09 654.5,435.09 655,435.10 655.5,435.10 656,435.10 656.5,435.10 657,435.10 657.5,435.10 658,435.10 658.5,435.10 659,435.11 659.5,435.11 660,435.11 660.5,435.11 661,435.11 661.5,435.11 662,435.11 662.5,435.12 663,435.12 663.5,435.12 664,435.12 664.5,435.12 665,435.12 665.5,435.12 666,435.12 666.5,435.13 667,435.13 667.5,435.13 668,435.13 668.5,435.13 669,435.13 669.5,435.13 670,435.13 670.5,435.14 671,435.14 671.5,435.14 672,435.14 672.5,435.14 673,435.14 673.5,435.14 674,435.14 674.5,435.14 675,435.15 675.5,435.15 676,435.15 676.5,435.15 677,435.15 677.5,435.15 678,435.15 678.5,435.15 679,435.15 679.5,435.16 680,435.16 680.5,435.16 681,435.16 681.5,435.16 682,435.16 682.5,435.16 683,435.16 683.5,435.16 684,435.16 684.5,435.17 685,435.17 685.5,435.17 686,435.17 686.5,435.17 687,435.17 687.5,435.17 688,435.17 688.5,435.17 689,435.17 689.5,435.17 690,435.17 690.5,435.18 691,435.18 691.5,435.18 692,435.18 692.5,435.18 693,435.18 693.5,435.18 694,435.18 694.5,435.18 695,435.18 695.5,435.18 696,435.18 696.5,435.18 697,435.18 697.5,435.19 698,435.19 698.5,435.19 699,435.19 699.5,435.19 700,435.19 700.5,435.19 701,435.19 701.5,435.19 702,435.19 702.5,435.19 703,435.19 703.5,435.19 704,435.19 704.5,435.19 705,435.19 705.5,435.19 706,435.19 706.5,435.19 707,435.19 707.5,435.20 708,435.20 708.5,435.20 709,435.20 709.5,435.20 710,435.20 710.5,435.20 711,435.20 711.5,435.20 712,435.20 712.5,435.20 713,435.20 713.5,435.20 714,435.20 714.5,435.20 715,435.20 715.5,435.20 716,435.20 716.5,435.20 717,435.20 717.5,435.20 718,435.20 718.5,435.20 719,435.20 719.5,435.20 720,435.20 720.5,435.20 721,435.20 721.5,435.20 722,435.20 722.5,435.20 723,435.20 723.5,435.20 724,435.20 724.5,435.20 725,435.20 725.5,435.20 726,435.20 726.5,435.20 727,435.20 727.5,435.20 728,435.20 728.5,435.20 729,435.20 729.5,435.20 730,435.20 730.5,435.20 731,435.20 731.5,435.20 732,435.20 732.5,435.20 733,435.20 733.5,435.20 734,435.21 734.5,435.21 735,435.21 735.5,435.21 736,435.21 736.5,435.21 737,435.21 737.5,435.21 738,435.21 738.5,435.21 739,435.21 739.5,435.21 740,435.21 740.5,435.21 741,435.21 741.5,435.21 742,435.21 742.5,435.21 743,435.21 743.5,435.21 744,435.21 744.5,435.21 745,435.21 745.5,435.21 746,435.21 746.5,435.21 747,435.21 747.5,435.21 748,435.21 748.5,435.21 749,435.21 749.5,435.21 750,435.21 750.5,435.21 751,435.21 751.5,435.21 752,435.21 752.5,435.20 753,435.20 753.5,435.20 754,435.20 754.5,435.20 755,435.20 755.5,435.20 756,435.20 756.5,435.20 757,435.20 757.5,435.20 758,435.20 758.5,435.20 759,435.20 759.5,435.20 760,435.20 760.5,435.20 761,435.20 761.5,435.20 762,435.20 762.5,435.20 763,435.20 763.5,435.20 764,435.20 764.5,435.20 765,435.20 765.5,435.20 766,435.20 766.5,435.20 767,435.20 767.5,435.20 768,435.20 768.5,435.20 769,435.20 769.5,435.20 770,435.20 770.5,435.20 771,435.20 771.5,435.20 772,435.20 772.5,435.20 773,435.20 773.5,435.20 774,435.20 774.5,435.20 775,435.20 775.5,435.20 776,435.20 776.5,435.20 777,435.20 777.5,435.20 778,435.20 778.5,435.20 779,435.20 779.5,435.20 780,435.20 780.5,435.20 781,435.20 781.5,435.20 782,435.20 782.5,435.20 783,435.20 783.5,435.20 784,435.20 784.5,435.20 785,435.20 785.5,435.20 786,435.20 786.5,435.20 787,435.20" stroke="#981c8a"/>
    <path d="M62,103.11 62.5,102.80 63,102.48 63.5,102.17 64,101.90 64.5,101.67 65,101.50 65.5,101.38 66,101.32 66.5,101.33 67,101.39 67.5,101.52 68,101.71 68.5,101.96 69,102.28 69.5,102.65 70,103.09 70.5,103.59 71,104.14 71.5,104.76 72,105.43 72.5,106.17 73,106.95 73.5,107.80 74,108.70 74.5,109.66 75,110.67 75.5,111.74 76,112.85 76.5,114.02 77,115.25 77.5,116.52 78,117.84 78.5,119.22 79,120.64 79.5,122.11 80,123.63 80.5,125.19 81,126.81 81.5,128.46 82,130.17 82.5,131.91 83,133.70 83.5,135.53 84,137.41 84.5,139.32 85,141.28 85.5,143.28 86,145.31 86.5,147.39 87,149.50 87.5,151.65 88,153.83 88.5,156.06 89,158.31 89.5,160.61 90,162.93 90.5,165.29 91,167.68 91.5,170.10 92,172.56 92.5,175.04 93,177.55 93.5,180.10 94,182.67 94.5,185.27 95,187.89 95.5,190.54 96,193.22 96.5,195.92 97,198.65 97.5,201.40 98,204.18 98.5,206.97 99,209.79 99.5,212.63 100,215.49 100.5,218.37 101,221.27 101.5,224.18 102,227.12 102.5,230.07 103,233.04 103.5,236.03 104,239.03 104.5,242.04 105,245.07 105.5,248.12 106,251.17 106.5,254.24 107,257.32 107.5,260.41 108,263.52 108.5,266.63 109,269.75 109.5,272.88 110,276.02 110.5,279.17 111,282.32 111.5,285.48 112,288.65 112.5,291.82 113,295.00 113.5,298.18 114,301.37 114.5,304.56 115,307.75 115.5,310.95 116,314.14 116.5,317.34 117,320.54 117.5,323.74 118,326.94 118.5,330.14 119,333.33 119.5,336.53 120,339.72 120.5,342.92 121,346.10 121.5,349.29 122,352.47 122.5,355.64 123,358.82 123.5,361.98 124,365.14 124.5,368.30 125,371.44 125.5,374.58 126,377.72 126.5,380.84 127,383.96 127.5,387.07 128,390.17 128.5,393.26 129,396.34 129.5,399.41 130,402.46 130.5,405.51 131,408.55 131.5,411.57 132,414.59 132.5,417.59 133,420.58 133.5,423.55 134,426.51 134.5,429.46 135,432.39 135.5,435.31 136,438.22 136.5,441.11 137,443.98 137.5,446.84 138,449.68 138.5,452.51 139,455.32 139.5,458.12 140,460.89 140.5,463.65 141,466.39 141.5,469.12 142,471.82 142.5,474.51 143,477.18 143.5,479.83 144,482.47 144.5,485.08 145,487.67 145.5,490.24 146,492.80 146.5,495.33 147,497.85 147.5,500.34 148,502.81 148.5,505.26 149,507.69 149.5,510.10 150,512.49 150.5,514.86 151,517.21 151.5,519.53 152,521.83 152.5,524.11 153,526.37 153.5,528.60 154,530.81 154.5,533.00 155,535.17 155.5,537.32 156,539.44 156.5,541.54 157,543.61 157.5,545.66 158,547.69 158.5,549.70 159,551.68 159.5,553.64 160,555.57 160.5,557.48 161,559.37 161.5,561.23 162,563.07 162.5,564.89 163,566.68 163.5,568.44 164,570.19 164.5,571.91 165,573.60 165.5,575.27 166,576.92 166.5,578.54 167,580.14 167.5,581.71 168,583.26 168.5,584.78 169,586.28 169.5,587.76 170,589.21 170.5,590.64 171,592.04 171.5,593.42 172,594.77 172.5,596.10 173,597.41 173.5,598.69 174,599.95 174.5,601.18 175,602.39 175.5,603.58 176,604.74 176.5,605.87 177,606.99 177.5,608.08 178,609.14 178.5,610.18 179,611.20 179.5,612.20 180,613.17 180.5,614.12 181,615.04 181.5,615.94 182,616.82 182.5,617.68 183,618.51 183.5,619.32 184,620.10 184.5,620.87 185,621.61 185.5,622.33 186,623.02 186.5,623.70 187,624.35 187.5,624.98 188,625.58 188.5,626.17 189,626.73 189.5,627.27 190,627.79 190.5,628.29 191,628.77 191.5,629.23 192,629.66 192.5,630.08 193,630.47 193.5,630.84 194,631.19 194.5,631.53 195,631.84 195.5,632.13 196,632.40 196.5,632.65 197,632.89 197.5,633.10 198,633.29 198.5,633.47 199,633.62 199.5,633.76 200,633.87 200.5,633.97 201,634.05 201.5,634.12 202,634.16 202.5,634.19 203,634.20 203.5,634.19 204,634.16 204.5,634.12 205,634.05 205.5,633.98 206,633.88 206.5,633.77 207,633.64 207.5,633.50 208,633.34 208.5,633.16 209,632.97 209.5,632.76 210,632.54 210.5,632.30 211,632.05 211.5,631.78 212,631.50 212.5,631.20 213,630.89 213.5,630.57 214,630.23 214.5,629.87 215,629.51 215.5,629.13 216,628.73 216.5,628.33 217,627.91 217.5,627.47 218,627.03 218.5,626.57 219,626.10 219.5,625.62 220,625.13 220.5,624.63 221,624.11 221.5,623.58 222,623.05 222.5,622.50 223,621.94 223.5,621.37 224,620.79 224.5,620.20 225,619.60 225.5,618.99 226,618.37 226.5,617.74 227,617.10 227.5,616.45 228,615.80 228.5,615.13 229,614.46 229.5,613.78 230,613.09 230.5,612.39 231,611.68 231.5,610.97 232,610.25 232.5,609.52 233,608.79 233.5,608.04 234,607.30 234.5,606.54 235,605.78 235.5,605.01 236,604.24 236.5,603.46 237,602.67 237.5,601.88 238,601.09 238.5,600.29 239,599.48 239.5,598.67 240,597.86 240.5,597.04 241,596.21 241.5,595.38 242,594.55 242.5,593.71 243,592.87 243.5,592.03 244,591.18 244.5,590.33 245,589.48 245.5,588.63 246,587.77 246.5,586.91 247,586.04 247.5,585.18 248,584.31 248.5,583.44 249,582.57 249.5,581.69 250,580.82 250.5,579.94 251,579.07 251.5,578.19 252,577.31 252.5,576.43 253,575.55 253.5,574.67 254,573.78 254.5,572.90 255,572.02 255.5,571.14 256,570.26 256.5,569.37 257,568.49 257.5,567.61 258,566.73 258.5,565.85 259,564.98 259.5,564.10 260,563.22 260.5,562.35 261,561.48 261.5,560.60 262,559.73 262.5,558.87 263,558.00 263.5,557.14 264,556.27 264.5,555.42 265,554.56 265.5,553.70 266,552.85 266.5,552.00 267,551.15 267.5,550.31 268,549.47 268.5,548.63 269,547.80 269.5,546.97 270,546.14 270.5,545.31 271,544.49 271.5,543.68 272,542.86 272.5,542.05 273,541.25 273.5,540.45 274,539.65 274.5,538.86 275,538.07 275.5,537.28 276,536.50 276.5,535.73 277,534.96 277.5,534.19 278,533.43 278.5,532.67 279,531.92 279.5,531.17 280,530.43 280.5,529.69 281,528.96 281.5,528.24 282,527.52 282.5,526.80 283,526.09 283.5,525.39 284,524.69 284.5,523.99 285,523.30 285.5,522.62 286,521.95 286.5,521.28 287,520.61 287.5,519.95 288,519.30 288.5,518.65 289,518.01 289.5,517.38 290,516.75 290.5,516.13 291,515.51 291.5,514.90 292,514.30 292.5,513.70 293,513.11 293.5,512.52 294,511.95 294.5,511.38 295,510.81 295.5,510.25 296,509.70 296.5,509.15 297,508.62 297.5,508.08 298,507.56 298.5,507.04 299,506.53 299.5,506.02 300,505.52 300.5,505.03 301,504.55 301.5,504.07 302,503.60 302.5,503.13 303,502.67 303.5,502.22 304,501.78 304.5,501.34 305,500.91 305.5,500.49 306,500.07 306.5,499.66 307,499.26 307.5,498.86 308,498.47 308.5,498.09 309,497.71 309.5,497.34 310,496.98 310.5,496.63 311,496.28 311.5,495.94 312,495.60 312.5,495.27 313,494.95 313.5,494.64 314,494.33 314.5,494.03 315,493.74 315.5,493.45 316,493.17 316.5,492.90 317,492.63 317.5,492.37 318,492.11 318.5,491.87 319,491.63 319.5,491.39 320,491.16 320.5,490.94 321,490.73 321.5,490.52 322,490.32 322.5,490.13 323,489.94 323.5,489.75 324,489.58 324.5,489.41 325,489.25 325.5,489.09 326,488.94 326.5,488.79 327,488.66 327.5,488.52 328,488.40 328.5,488.28 329,488.16 329.5,488.05 330,487.95 330.5,487.86 331,487.77 331.5,487.68 332,487.60 332.5,487.53 333,487.46 333.5,487.40 334,487.35 334.5,487.29 335,487.25 335.5,487.21 336,487.18 336.5,487.15 337,487.13 337.5,487.11 338,487.10 338.5,487.09 339,487.09 339.5,487.09 340,487.10 340.5,487.11 341,487.13 341.5,487.15 342,487.18 342.5,487.22 343,487.25 343.5,487.30 344,487.34 344.5,487.40 345,487.45 345.5,487.51 346,487.58 346.5,487.65 347,487.72 347.5,487.80 348,487.89 348.5,487.97 349,488.07 349.5,488.16 350,488.26 350.5,488.37 351,488.47 351.5,488.59 352,488.70 352.5,488.82 353,488.94 353.5,489.07 354,489.20 354.5,489.34 355,489.48 355.5,489.62 356,489.76 356.5,489.91 357,490.06 357.5,490.22 358,490.38 358.5,490.54 359,490.70 359.5,490.87 360,491.04 360.5,491.21 361,491.39 361.5,491.57 362,491.75 362.5,491.94 363,492.12 363.5,492.31 364,492.51 364.5,492.70 365,492.90 365.5,493.10 366,493.30 366.5,493.51 367,493.71 367.5,493.92 368,494.13 368.5,494.35 369,494.56 369.5,494.78 370,495.00 370.5,495.22 371,495.44 371.5,495.67 372,495.90 372.5,496.12 373,496.35 373.5,496.59 374,496.82 374.5,497.05 375,497.29 375.5,497.53 376,497.76 376.5,498.00 377,498.25 377.5,498.49 378,498.73 378.5,498.98 379,499.22 379.5,499.47 380,499.71 380.5,499.96 381,500.21 381.5,500.46 382,500.71 382.5,500.96 383,501.21 383.5,501.47 384,501.72 384.5,501.97 385,502.22 385.5,502.48 386,502.73 386.5,502.99 387,503.24 387.5,503.50 388,503.75 388.5,504.01 389,504.26 389.5,504.52 390,504.77 390.5,505.03 391,505.29 391.5,505.54 392,505.80 392.5,506.05 393,506.31 393.5,506.56 394,506.81 394.5,507.07 395,507.32 395.5,507.57 396,507.83 396.5,508.08 397,508.33 397.5,508.58 398,508.83 398.5,509.08 399,509.33 399.5,509.58 400,509.82 400.5,510.07 401,510.32 401.5,510.56 402,510.80 402.5,511.05 403,511.29 403.5,511.53 404,511.77 404.5,512.01 405,512.25 405.5,512.48 406,512.72 406.5,512.95 407,513.19 407.5,513.42 408,513.65 408.5,513.88 409,514.11 409.5,514.34 410,514.56 410.5,514.79 411,515.01 411.5,515.23 412,515.45 412.5,515.67 413,515.89 413.5,516.10 414,516.31 414.5,516.53 415,516.74 415.5,516.95 416,517.16 416.5,517.36 417,517.57 417.5,517.77 418,517.97 418.5,518.17 419,518.37 419.5,518.56 420,518.76 420.5,518.95 421,519.14 421.5,519.33 422,519.52 422.5,519.70 423,519.89 423.5,520.07 424,520.25 424.5,520.42 425,520.60 425.5,520.77 426,520.95 426.5,521.12 427,521.29 427.5,521.45 428,521.62 428.5,521.78 429,521.94 429.5,522.10 430,522.26 430.5,522.41 431,522.56 431.5,522.71 432,522.86 432.5,523.01 433,523.15 433.5,523.30 434,523.44 434.5,523.58 435,523.71 435.5,523.85 436,523.98 436.5,524.11 437,524.24 437.5,524.36 438,524.49 438.5,524.61 439,524.73 439.5,524.85 440,524.97 440.5,525.08 441,525.19 441.5,525.30 442,525.41 442.5,525.52 443,525.62 443.5,525.72 444,525.82 444.5,525.92 445,526.02 445.5,526.11 446,526.20 446.5,526.29 447,526.38 447.5,526.47 448,526.55 448.5,526.63 449,526.71 449.5,526.79 450,526.87 450.5,526.94 451,527.01 451.5,527.09 452,527.15 452.5,527.22 453,527.28 453.5,527.35 454,527.41 454.5,527.47 455,527.52 455.5,527.58 456,527.63 456.5,527.68 457,527.73 457.5,527.78 458,527.83 458.5,527.87 459,527.91 459.5,527.95 460,527.99 460.5,528.03 461,528.06 461.5,528.10 462,528.13 462.5,528.16 463,528.19 463.5,528.21 464,528.24 464.5,528.26 465,528.28 465.5,528.30 466,528.32 466.5,528.34 467,528.36 467.5,528.37 468,528.38 468.5,528.39 469,528.40 469.5,528.41 470,528.41 470.5,528.42 471,528.42 471.5,528.42 472,528.42 472.5,528.42 473,528.42 473.5,528.41 474,528.41 474.5,528.40 475,528.39 475.5,528.38 476,528.37 476.5,528.36 477,528.35 477.5,528.33 478,528.32 478.5,528.30 479,528.28 479.5,528.26 480,528.24 480.5,528.22 481,528.19 481.5,528.17 482,528.14 482.5,528.11 483,528.09 483.5,528.06 484,528.03 484.5,528.00 485,527.96 485.5,527.93 486,527.90 486.5,527.86 487,527.83 487.5,527.79 488,527.75 488.5,527.71 489,527.67 489.5,527.63 490,527.59 490.5,527.55 491,527.50 491.5,527.46 492,527.41 492.5,527.37 493,527.32 493.5,527.27 494,527.22 494.5,527.18 495,527.13 495.5,527.08 496,527.03 496.5,526.97 497,526.92 497.5,526.87 498,526.81 498.5,526.76 499,526.71 499.5,526.65 500,526.59 500.5,526.54 501,526.48 501.5,526.42 502,526.37 502.5,526.31 503,526.25 503.5,526.19 504,526.13 504.5,526.07 505,526.01 505.5,525.95 506,525.89 506.5,525.83 507,525.76 507.5,525.70 508,525.64 508.5,525.57 509,525.51 509.5,525.45 510,525.38 510.5,525.32 511,525.26 511.5,525.19 512,525.13 512.5,525.06 513,525.00 513.5,524.93 514,524.86 514.5,524.80 515,524.73 515.5,524.67 516,524.60 516.5,524.54 517,524.47 517.5,524.40 518,524.34 518.5,524.27 519,524.20 519.5,524.14 520,524.07 520.5,524.00 521,523.94 521.5,523.87 522,523.80 522.5,523.74 523,523.67 523.5,523.60 524,523.54 524.5,523.47 525,523.41 525.5,523.34 526,523.27 526.5,523.21 527,523.14 527.5,523.08 528,523.01 528.5,522.95 529,522.88 529.5,522.82 530,522.75 530.5,522.69 531,522.62 531.5,522.56 532,522.49 532.5,522.43 533,522.37 533.5,522.30 534,522.24 534.5,522.18 535,522.11 535.5,522.05 536,521.99 536.5,521.93 537,521.87 537.5,521.81 538,521.74 538.5,521.68 539,521.62 539.5,521.56 540,521.50 540.5,521.45 541,521.39 541.5,521.33 542,521.27 542.5,521.21 543,521.15 543.5,521.10 544,521.04 544.5,520.98 545,520.93 545.5,520.87 546,520.82 546.5,520.76 547,520.71 547.5,520.65 548,520.60 548.5,520.54 549,520.49 549.5,520.44 550,520.39 550.5,520.33 551,520.28 551.5,520.23 552,520.18 552.5,520.13 553,520.08 553.5,520.03 554,519.98 554.5,519.94 555,519.89 555.5,519.84 556,519.79 556.5,519.75 557,519.70 557.5,519.66 558,519.61 558.5,519.57 559,519.52 559.5,519.48 560,519.43 560.5,519.39 561,519.35 561.5,519.31 562,519.27 562.5,519.22 563,519.18 563.5,519.14 564,519.10 564.5,519.07 565,519.03 565.5,518.99 566,518.95 566.5,518.91 567,518.88 567.5,518.84 568,518.80 568.5,518.77 569,518.73 569.5,518.70 570,518.67 570.5,518.63 571,518.60 571.5,518.57 572,518.54 572.5,518.50 573,518.47 573.5,518.44 574,518.41 574.5,518.38 575,518.35 575.5,518.32 576,518.30 576.5,518.27 577,518.24 577.5,518.21 578,518.19 578.5,518.16 579,518.14 579.5,518.11 580,518.09 580.5,518.06 581,518.04 581.5,518.01 582,517.99 582.5,517.97 583,517.95 583.5,517.93 584,517.90 584.5,517.88 585,517.86 585.5,517.84 586,517.82 586.5,517.81 587,517.79 587.5,517.77 588,517.75 588.5,517.73 589,517.72 589.5,517.70 590,517.69 590.5,517.67 591,517.65 591.5,517.64 592,517.63 592.5,517.61 593,517.60 593.5,517.59 594,517.57 594.5,517.56 595,517.55 595.5,517.54 596,517.53 596.5,517.52 597,517.50 597.5,517.49 598,517.48 598.5,517.48 599,517.47 599.5,517.46 600,517.45 600.5,517.44 601,517.43 601.5,517.43 602,517.42 602.5,517.41 603,517.41 603.5,517.40 604,517.40 604.5,517.39 605,517.39 605.5,517.38 606,517.38 606.5,517.38 607,517.37 607.5,517.37 608,517.37 608.5,517.36 609,517.36 609.5,517.36 610,517.36 610.5,517.36 611,517.36 611.5,517.36 612,517.36 612.5,517.36 613,517.36 613.5,517.36 614,517.36 614.5,517.36 615,517.36 615.5,517.36 616,517.36 616.5,517.37 617,517.37 617.5,517.37 618,517.38 618.5,517.38 619,517.38 619.5,517.39 620,517.39 620.5,517.39 621,517.40 621.5,517.40 622,517.41 622.5,517.41 623,517.42 623.5,517.43 624,517.43 624.5,517.44 625,517.44 625.5,517.45 626,517.46 626.5,517.47 627,517.47 627.5,517.48 628,517.49 628.5,517.50 629,517.50 629.5,517.51 630,517.52 630.5,517.53 631,517.54 631.5,517.55 632,517.56 632.5,517.57 633,517.58 633.5,517.59 634,517.60 634.5,517.61 635,517.62 635.5,517.63 636,517.64 636.5,517.65 637,517.66 637.5,517.67 638,517.68 638.5,517.69 639,517.70 639.5,517.72 640,517.73 640.5,517.74 641,517.75 641.5,517.76 642,517.78 642.5,517.79 643,517.80 643.5,517.81 644,517.83 644.5,517.84 645,517.85 645.5,517.87 646,517.88 646.5,517.89 647,517.91 647.5,517.92 648,517.93 648.5,517.95 649,517.96 649.5,517.98 650,517.99 650.5,518.00 651,518.02 651.5,518.03 652,518.05 652.5,518.06 653,518.08 653.5,518.09 654,518.11 654.5,518.12 655,518.14 655.5,518.15 656,518.17 656.5,518.18 657,518.20 657.5,518.21 658,518.23 658.5,518.24 659,518.26 659.5,518.27 660,518.29 660.5,518.31 661,518.32 661.5,518.34 662,518.35 662.5,518.37 663,518.38 663.5,518.40 664,518.42 664.5,518.43 665,518.45 665.5,518.46 666,518.48 666.5,518.50 667,518.51 667.5,518.53 668,518.54 668.5,518.56 669,518.58 669.5,518.59 670,518.61 670.5,518.62 671,518.64 671.5,518.66 672,518.67 672.5,518.69 673,518.71 673.5,518.72 674,518.74 674.5,518.75 675,518.77 675.5,518.79 676,518.80 676.5,518.82 677,518.83 677.5,518.85 678,518.87 678.5,518.88 679,518.90 679.5,518.91 680,518.93 680.5,518.95 681,518.96 681.5,518.98 682,518.99 682.5,519.01 683,519.02 683.5,519.04 684,519.06 684.5,519.07 685,519.09 685.5,519.10 686,519.12 686.5,519.13 687,519.15 687.5,519.16 688,519.18 688.5,519.19 689,519.21 689.5,519.22 690,519.24 690.5,519.25 691,519.27 691.5,519.28 692,519.30 692.5,519.31 693,519.33 693.5,519.34 694,519.36 694.5,519.37 695,519.39 695.5,519.40 696,519.41 696.5,519.43 697,519.44 697.5,519.46 698,519.47 698.5,519.48 699,519.50 699.5,519.51 700,519.53 700.5,519.54 701,519.55 701.5,519.57 702,519.58 702.5,519.59 703,519.61 703.5,519.62 704,519.63 704.5,519.64 705,519.66 705.5,519.67 706,519.68 706.5,519.69 707,519.71 707.5,519.72 708,519.73 708.5,519.74 709,519.75 709.5,519.76 710,519.78 710.5,519.79 711,519.80 711.5,519.81 712,519.82 712.5,519.83 713,519.84 713.5,519.85 714,519.86 714.5,519.88 715,519.89 715.5,519.90 716,519.91 716.5,519.92 717,519.93 717.5,519.94 718,519.95 718.5,519.96 719,519.96 719.5,519.97 720,519.98 720.5,519.99 721,520.00 721.5,520.01 722,520.02 722.5,520.03 723,520.04 723.5,520.04 724,520.05 724.5,520.06 725,520.07 725.5,520.08 726,520.08 726.5,520.09 727,520.10 727.5,520.11 728,520.11 728.5,520.12 729,520.13 729.5,520.13 730,520.14 730.5,520.15 731,520.15 731.5,520.16 732,520.16 732.5,520.17 733,520.18 733.5,520.18 734,520.19 734.5,520.19 735,520.20 735.5,520.20 736,520.21 736.5,520.21 737,520.22 737.5,520.22 738,520.23 738.5,520.23 739,520.23 739.5,520.24 740,520.24 740.5,520.25 741,520.25 741.5,520.25 742,520.26 742.5,520.26 743,520.26 743.5,520.26 744,520.27 744.5,520.27 745,520.27 745.5,520.27 746,520.28 746.5,520.28 747,520.28 747.5,520.28 748,520.28 748.5,520.29 749,520.29 749.5,520.29 750,520.29 750.5,520.29 751,520.29 751.5,520.29 752,520.29 752.5,520.29 753,520.29 753.5,520.29 754,520.29 754.5,520.29 755,520.29 755.5,520.29 756,520.29 756.5,520.29 757,520.29 757.5,520.29 758,520.29 758.5,520.29 759,520.29 759.5,520.29 760,520.29 760.5,520.29 761,520.28 761.5,520.28 762,520.28 762.5,520.28 763,520.28 763.5,520.27 764,520.27 764.5,520.27 765,520.27 765.5,520.26 766,520.26 766.5,520.26 767,520.26 767.5,520.25 768,520.25 768.5,520.25 769,520.24 769.5,520.24 770,520.24 770.5,520.23 771,520.23 771.5,520.23 772,520.22 772.5,520.22 773,520.21 773.5,520.21 774,520.21 774.5,520.20 775,520.20 775.5,520.19 776,520.19 776.5,520.18 777,520.18 777.5,520.17 778,520.17 778.5,520.17 779,520.16 779.5,520.16 780,520.15 780.5,520.14 781,520.14 781.5,520.13 782,520.13 782.5,520.12 783,520.12 783.5,520.11 784,520.11 784.5,520.10 785,520.10 785.5,520.09 786,520.08 786.5,520.08 787,520.07" stroke="#69775c"/>
  </g>
</svg>
<svg class="abs" width="813" height="688" shape-rendering="crispEdges">
  <g fill="#000">
    <rect x="61" y="81" width="727" height="1"/>
    <rect x="61" y="635" width="727" height="1"/>
    <rect x="61" y="81" width="1" height="555"/>
    <rect x="787" y="81" width="1" height="555"/>
    <rect x="62" y="104" width="6" height="1"/><rect x="781" y="104" width="6" height="1"/><rect x="62" y="171" width="6" height="1"/><rect x="781" y="171" width="6" height="1"/><rect x="62" y="238" width="6" height="1"/><rect x="781" y="238" width="6" height="1"/><rect x="62" y="305" width="6" height="1"/><rect x="781" y="305" width="6" height="1"/><rect x="62" y="372" width="6" height="1"/><rect x="781" y="372" width="6" height="1"/><rect x="62" y="438" width="6" height="1"/><rect x="781" y="438" width="6" height="1"/><rect x="62" y="505" width="6" height="1"/><rect x="781" y="505" width="6" height="1"/><rect x="62" y="572" width="6" height="1"/><rect x="781" y="572" width="6" height="1"/><rect x="206" y="629" width="1" height="6"/><rect x="206" y="82" width="1" height="6"/><rect x="352" y="629" width="1" height="6"/><rect x="352" y="82" width="1" height="6"/><rect x="497" y="629" width="1" height="6"/><rect x="497" y="82" width="1" height="6"/><rect x="642" y="629" width="1" height="6"/><rect x="642" y="82" width="1" height="6"/>
  </g>
</svg>
<svg class="abs" width="813" height="688" font-family="Liberation Sans" font-size="12" fill="#000">
  <text x="55.6" y="110" text-anchor="end">0</text><text x="55.6" y="177" text-anchor="end">-0.05</text><text x="55.6" y="244" text-anchor="end">-0.1</text><text x="55.6" y="311" text-anchor="end">-0.15</text><text x="55.6" y="378" text-anchor="end">-0.2</text><text x="55.6" y="444" text-anchor="end">-0.25</text><text x="55.6" y="511" text-anchor="end">-0.3</text><text x="55.6" y="578" text-anchor="end">-0.35</text><text x="63.7" y="656" text-anchor="middle">0</text><text x="208.5" y="656" text-anchor="middle">2</text><text x="353.5" y="656" text-anchor="middle">4</text><text x="498.7" y="656" text-anchor="middle">6</text><text x="644.4" y="656" text-anchor="middle">8</text><text x="790.0" y="656" text-anchor="middle">10</text>
</svg>
<div class="t" style="left:18px;top:672px;color:#000;letter-spacing:0.12px;">3.35215,</div>
<div class="t" style="left:74px;top:672px;color:#000;letter-spacing:0.35px;">0.0290782</div>
</body></html>
